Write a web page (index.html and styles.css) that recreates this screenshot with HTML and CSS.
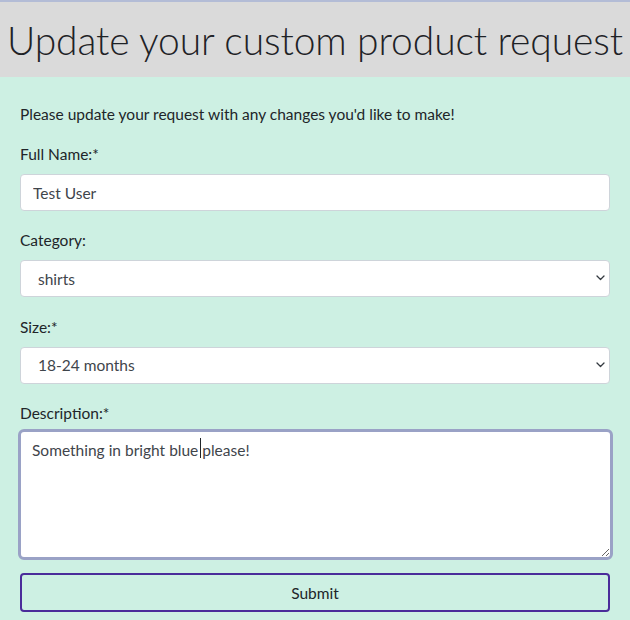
FILE: index.html
```html
<!DOCTYPE html>
<html lang="en">
<head>
<meta charset="utf-8">
<title>Update your custom product request</title>
<link rel="stylesheet" href="styles.css">
</head>
<body>
<header class="page-header">
  <h1 class="page-title">Update your custom product request</h1>
</header>
<main class="content">
  <p class="intro">Please update your request with any changes you'd like to make!</p>
  <form class="request-form">
    <div class="field">
      <label class="field-label" for="name">Full Name:*</label>
      <input class="control" id="name" type="text" value="Test User">
    </div>
    <div class="field">
      <label class="field-label" for="category">Category:</label>
      <div class="select-wrap">
        <select class="control select" id="category">
          <option>shirts</option>
        </select>
        <svg class="chevron" width="9" height="6" viewBox="0 0 9 6"><path d="M1 1l3.5 3.5L8 1" fill="none" stroke="#343a40" stroke-width="1.3" stroke-linecap="round" stroke-linejoin="round"/></svg>
      </div>
    </div>
    <div class="field">
      <label class="field-label" for="size">Size:*</label>
      <div class="select-wrap">
        <select class="control select" id="size">
          <option>18-24 months</option>
        </select>
        <svg class="chevron" width="9" height="6" viewBox="0 0 9 6"><path d="M1 1l3.5 3.5L8 1" fill="none" stroke="#343a40" stroke-width="1.3" stroke-linecap="round" stroke-linejoin="round"/></svg>
      </div>
    </div>
    <div class="field field-desc">
      <label class="field-label" for="desc">Description:*</label>
      <div class="textarea-wrap">
        <textarea class="control textarea" id="desc">Something in bright blue please!</textarea>
        <span class="caret"></span>
      </div>
    </div>
    <button class="submit" type="button">Submit</button>
  </form>
</main>
</body>
</html>
```

FILE: styles.css
```css
html, body {
  margin: 0;
  padding: 0;
}
body {
  background: #cdf0e3;
  font-family: Lato, "Noto Sans", sans-serif;
  color: #212529;
  font-size: 15.5px;
  line-height: 24px;
}
.page-header {
  background: #dadada;
  border-top: 2px solid #b3bcd6;
  height: 75px;
  display: flex;
  align-items: center;
  justify-content: center;
}
.page-title {
  margin: 0;
  font-size: 39px;
  font-weight: 300;
  letter-spacing: -0.1px;
  line-height: 48px;
  white-space: nowrap;
  color: #1e2226;
}
.content {
  padding: 25px 20px 0;
}
.intro {
  margin: 0 0 16px;
}
.request-form {
  display: flex;
  flex-direction: column;
}
.field {
  display: flex;
  flex-direction: column;
  margin-bottom: 17.4px;
}
.field-label {
  margin-bottom: 8px;
}
.control {
  box-sizing: border-box;
  width: 100%;
  height: 37px;
  border: 1px solid #ced4da;
  border-radius: 4px;
  background: #fff;
  font-family: inherit;
  font-size: 15.5px;
  color: #3f454b;
  padding: 0 12px;
  margin: 0;
  outline: none;
}
.select-wrap {
  position: relative;
}
.select {
  appearance: none;
  -webkit-appearance: none;
  padding-left: 17px;
}
.chevron {
  position: absolute;
  right: 5px;
  top: 15px;
}
.textarea-wrap {
  position: relative;
  margin: -4px -3px 0 -2px;
}
.textarea {
  display: block;
  height: 131px;
  border: 3px solid #9aa2c6;
  border-radius: 6px;
  padding: 6px 11px;
  line-height: 24px;
  resize: both;
}
.caret {
  position: absolute;
  left: 181.5px;
  top: 9px;
  width: 1px;
  height: 20px;
  background: #212529;
}
.field-desc {
  margin-bottom: 13px;
}
.submit {
  box-sizing: border-box;
  height: 39px;
  width: 100%;
  background: transparent;
  border: 2px solid #4a2c9a;
  border-radius: 4px;
  font-family: inherit;
  font-size: 15.5px;
  color: #212529;
}
```
